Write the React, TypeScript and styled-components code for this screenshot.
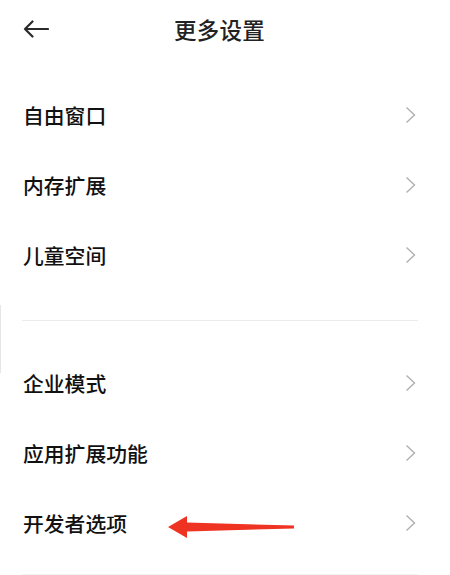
import styled, { createGlobalStyle } from "styled-components";

const GlobalStyle = createGlobalStyle`
  html, body {
    margin: 0;
    padding: 0;
    background: #fff;
  }
  body {
    font-family: "Noto Sans CJK SC", "Noto Sans", sans-serif;
    -webkit-font-smoothing: antialiased;
  }
`;

const Page = styled.div`
  position: relative;
  width: 450px;
  height: 575px;
  overflow: hidden;
  background: #fff;
`;

const Header = styled.header`
  display: grid;
  grid-template-columns: 1fr auto 1fr;
  align-items: center;
  height: 58px;
  padding: 0 22px 0 23px;
  box-sizing: border-box;
`;

const BackButton = styled.button`
  display: flex;
  align-items: center;
  justify-self: start;
  padding: 0;
  border: 0;
  background: none;
  color: #222;
`;

const Title = styled.h1`
  margin: 0 12px 0 0;
  font-size: 22.5px;
  font-weight: 500;
  color: #222;
  letter-spacing: 0.3px;
`;

const List = styled.ul`
  list-style: none;
  margin: 0;
  padding: 22px 0 0;
`;

const Row = styled.li`
  position: relative;
  display: flex;
  align-items: center;
  justify-content: space-between;
  height: 70px;
  padding: 0 34px 0 23px;
  box-sizing: border-box;
`;

const Label = styled.span`
  font-size: 20.8px;
  font-weight: 500;
  color: #111;
`;

const Divider = styled.li<{ $above: number; $below: number; $tone: string }>`
  height: 1px;
  margin: ${(p) => p.$above}px 32px ${(p) => p.$below}px 22px;
  background: ${(p) => p.$tone};
`;

const Pointer = styled.svg`
  position: absolute;
  left: 166px;
  top: 26px;
`;

const EdgeMark = styled.div`
  position: absolute;
  left: 0;
  top: 305px;
  width: 1px;
  height: 68px;
  background: #e6e6e6;
`;

const Chevron = () => (
  <svg width="11" height="18" viewBox="0 0 11 18">
    <path d="M1.5 1.5 L9.5 9 L1.5 16.5" fill="none" stroke="#b0b0b0" strokeWidth="1.4" />
  </svg>
);

const BackArrow = () => (
  <svg width="26" height="18" viewBox="0 0 26 18">
    <path
      d="M25 9 H2 M9.5 1.5 L2 9 L9.5 16.5"
      fill="none"
      stroke="#2a2a2a"
      strokeWidth="2.2"
      strokeLinecap="round"
      strokeLinejoin="round"
    />
  </svg>
);

const groupA = ["自由窗口", "内存扩展", "儿童空间"];
const groupB = ["企业模式", "应用扩展功能", "开发者选项"];

const App = () => {
  return (
    <Page>
      <GlobalStyle />
      <Header>
        <BackButton aria-label="返回">
          <BackArrow />
        </BackButton>
        <Title>更多设置</Title>
        <span />
      </Header>
      <List>
        {groupA.map((name) => (
          <Row key={name}>
            <Label>{name}</Label>
            <Chevron />
          </Row>
        ))}
        <Divider $above={30} $below={27} $tone="#ececec" />
        {groupB.map((name) => (
          <Row key={name}>
            <Label>{name}</Label>
            {name === "开发者选项" && (
              <Pointer width="130" height="26" viewBox="0 0 130 26">
                <polygon
                  points="2,13 21,2 21,8.5 128,11.5 128,14.5 21,17.5 21,24"
                  fill="#ef3322"
                />
              </Pointer>
            )}
            <Chevron />
          </Row>
        ))}
        <Divider $above={16} $below={0} $tone="#f3f3f3" />
      </List>
      <EdgeMark />
    </Page>
  );
};

export default App;
